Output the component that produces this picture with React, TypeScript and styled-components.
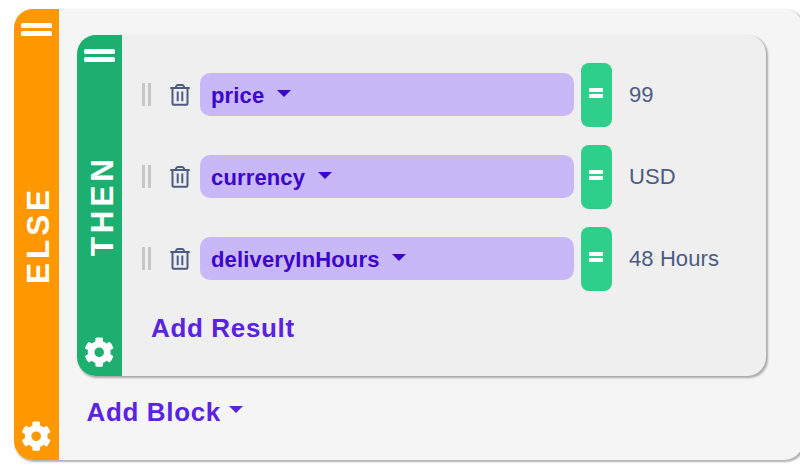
import React from "react";
import styled, { createGlobalStyle } from "styled-components";
import { FaCog } from "react-icons/fa";

const GlobalStyle = createGlobalStyle`
  * { box-sizing: border-box; }
  body { margin: 0; background: #fff; overflow: hidden; font-family: "Liberation Sans", Arial, sans-serif; }
`;

const Page = styled.main`
  width: 800px;
  height: 470px;
  padding: 9px 0 0 14px;
  overflow: hidden;
`;

const Block = styled.section<{ $w: number; $h: number; $bg: string }>`
  display: flex;
  width: ${(p) => p.$w}px;
  height: ${(p) => p.$h}px;
  background: ${(p) => p.$bg};
  border-radius: 19px;
  box-shadow: 1.5px 1.5px 2px rgba(0, 0, 0, 0.3);
`;

const Rail = styled.aside<{ $color: string; $trim: number }>`
  display: flex;
  flex-direction: column;
  align-items: center;
  width: 45px;
  flex: none;
  padding: 14px ${(p) => p.$trim}px 9px 0;
  background: ${(p) => p.$color};
  border-radius: 19px 0 0 19px;
`;

const Grip = styled.div`
  display: flex;
  flex-direction: column;
  gap: 3.4px;
  width: 31px;
  flex: none;

  &::before,
  &::after {
    content: "";
    height: 4.6px;
    border-radius: 1.5px;
    background: #fff;
  }
`;

const RailLabel = styled.div<{ $top: number }>`
  writing-mode: vertical-rl;
  transform: rotate(180deg);
  margin-top: ${(p) => p.$top}px;
  margin-right: -4px;
  line-height: 36px;
  font-size: 31.5px;
  font-weight: 700;
  letter-spacing: 3.9px;
  color: #fff;
`;

const GearIcon = styled(FaCog)`
  width: 30.4px;
  height: 30.4px;
  flex: none;
  margin-top: auto;
  color: #fff;
`;

const OuterBody = styled.div`
  padding: 26px 0 0 18px;
`;

const InnerBody = styled.div`
  padding: 27.5px 0 0 20px;
`;

const Rows = styled.div`
  display: flex;
  flex-direction: column;
  gap: 18px;
`;

const Row = styled.div`
  display: flex;
  align-items: center;
  height: 64px;
`;

const DragHandle = styled.div`
  width: 9px;
  height: 23px;
  margin-right: 20px;
  border: solid #c6c8c7;
  border-width: 0 3px;
`;

const TrashIcon = styled.svg`
  width: 20px;
  height: 24px;
  margin: 0 10px 0 -1px;
  fill: none;
  stroke: #4c5b82;
  stroke-width: 2;
`;

const Field = styled.button`
  display: flex;
  align-items: center;
  width: 374px;
  height: 43px;
  padding: 2px 11px 0;
  border: 0;
  border-radius: 10px;
  background: #c8b8f7;
  color: #3c05c9;
  font: 700 22px/26px "Liberation Sans", Arial, sans-serif;
  letter-spacing: 0.15px;
`;

const Caret = styled.span<{ $gap: number }>`
  border: solid transparent;
  border-width: 7px 7px 0;
  border-top-color: currentColor;
  margin: 0 0 5px ${(p) => p.$gap}px;
`;

const Operator = styled.button`
  display: flex;
  align-items: center;
  justify-content: center;
  width: 31px;
  height: 64px;
  margin: 0 17px 0 7px;
  padding: 0 1px 3px 0;
  border: 0;
  border-radius: 8px;
  background: #2ecf8a;
`;

const EqualsMark = styled.span`
  width: 14px;
  height: 10px;
  border: solid #fff;
  border-width: 4px 0;
`;

const Value = styled.span`
  padding-top: 1px;
  font-size: 22px;
  letter-spacing: 0.1px;
  color: #4c5b82;
`;

const AddButton = styled.button<{ $indent: number; $top: number }>`
  display: flex;
  align-items: center;
  margin: ${(p) => p.$top}px 0 0 ${(p) => p.$indent}px;
  padding: 0;
  border: 0;
  background: none;
  color: #5a23e2;
  font: 700 26px/30px "Liberation Sans", Arial, sans-serif;
  letter-spacing: 0.65px;
`;

const Trash = () => (
  <TrashIcon viewBox="0 0 20 24">
    <path d="M.3 5h19.4M2.5 5v15.8q0 1 1 1h13q1 0 1-1V5M5.6 4.6 6.4 2.9q.4-1 1.4-1h4.4q1 0 1.4 1l.8 1.7M7.7 8.4v9.8M12.3 8.4v9.8" />
  </TrashIcon>
);

const results = [
  { field: "price", value: "99" },
  { field: "currency", value: "USD" },
  { field: "deliveryInHours", value: "48 Hours" },
];

export default function App() {
  return (
    <>
      <GlobalStyle />
      <Page>
        <Block $w={789} $h={451} $bg="#f5f5f5">
          <Rail $color="#ff9800" $trim={1}>
            <Grip />
            <RailLabel $top={150}>ELSE</RailLabel>
            <GearIcon />
          </Rail>
          <OuterBody>
            <Block $w={689} $h={341} $bg="#efefef">
              <Rail $color="#1caf6f" $trim={0}>
                <Grip />
                <RailLabel $top={93}>THEN</RailLabel>
                <GearIcon />
              </Rail>
              <InnerBody>
                <Rows>
                  {results.map((r) => (
                    <Row key={r.field}>
                      <DragHandle />
                      <Trash />
                      <Field>
                        {r.field}
                        <Caret $gap={12.4} />
                      </Field>
                      <Operator>
                        <EqualsMark />
                      </Operator>
                      <Value>{r.value}</Value>
                    </Row>
                  ))}
                </Rows>
                <AddButton $indent={9} $top={22.5}>Add Result</AddButton>
              </InnerBody>
            </Block>
            <AddButton $indent={9.5} $top={21}>
              Add Block
              <Caret $gap={8} />
            </AddButton>
          </OuterBody>
        </Block>
      </Page>
    </>
  );
}
